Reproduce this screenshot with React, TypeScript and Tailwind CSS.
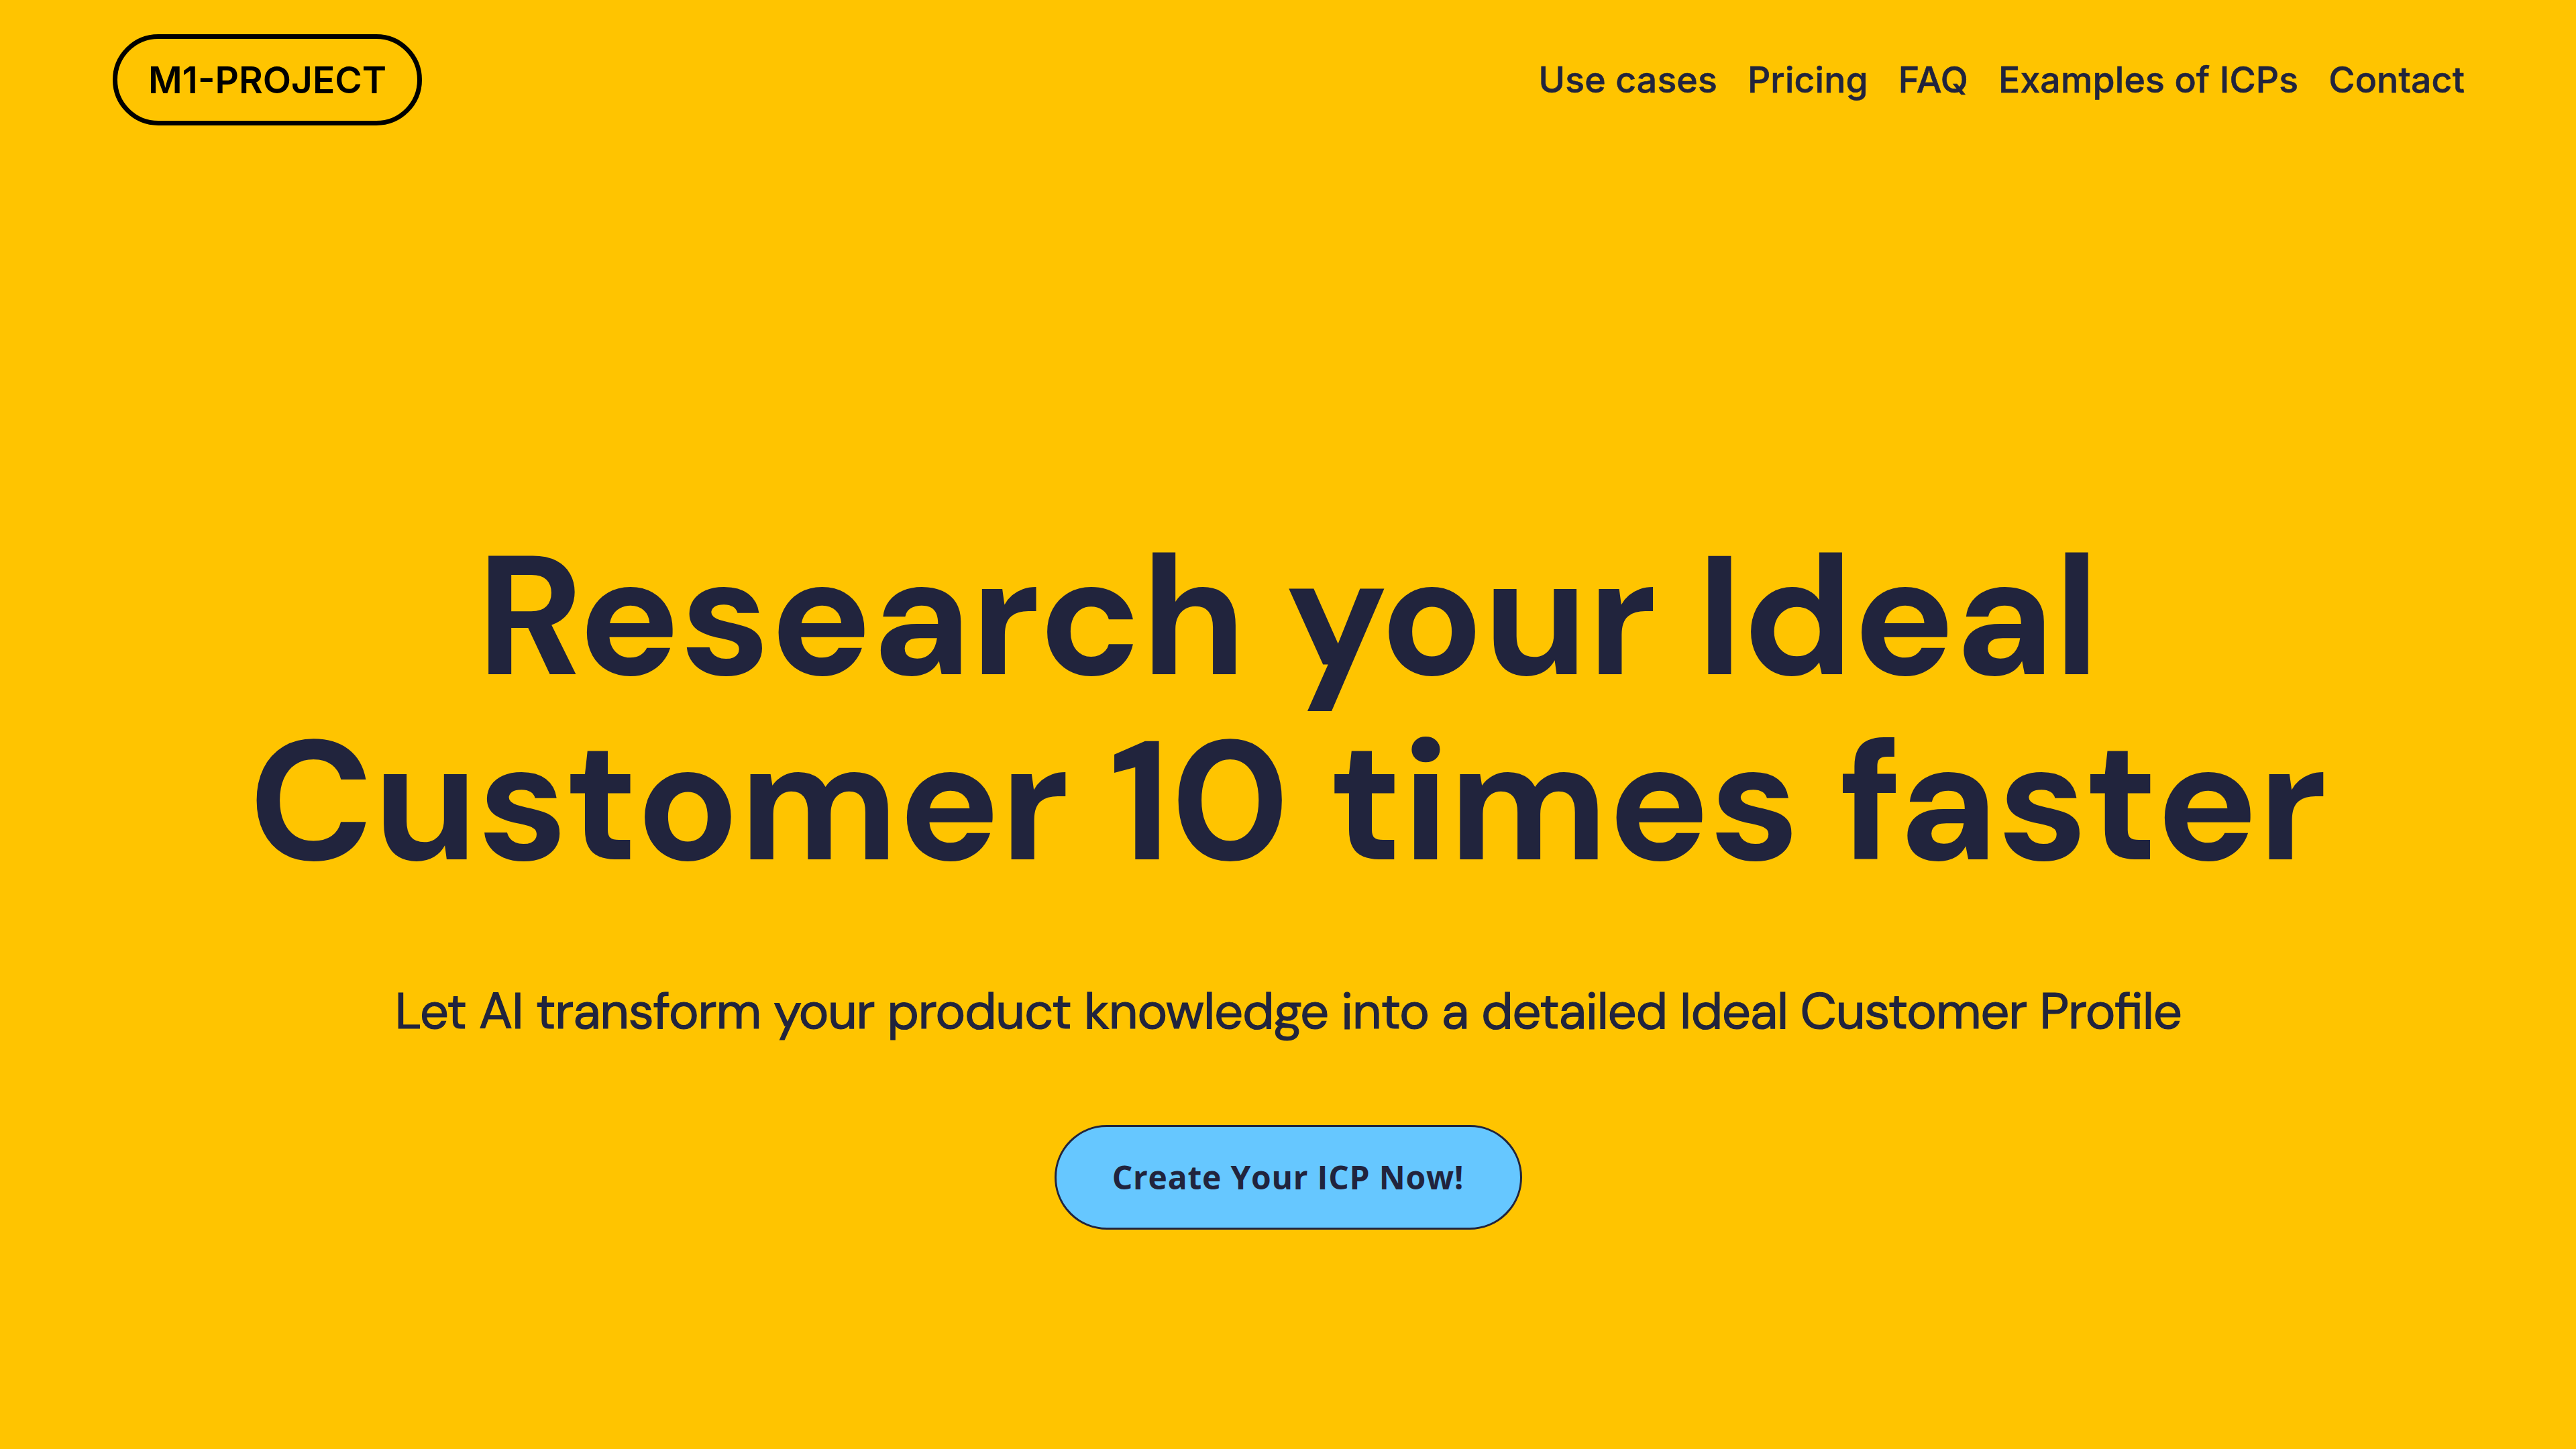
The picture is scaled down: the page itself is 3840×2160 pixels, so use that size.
import React from 'react';

const navLinks = ['Use cases', 'Pricing', 'FAQ', 'Examples of ICPs', 'Contact'];

const Header: React.FC = () => (
  <header className="flex items-center justify-between pt-[51px] pl-[168px] pr-[166px]">
    <a className="flex h-[136px] w-[461px] items-center justify-center rounded-full border-[7px] border-black font-['Inter',sans-serif] text-[55px] font-semibold leading-none text-black">
      M1-PROJECT
    </a>
    <nav className="flex gap-[45px] font-['Inter',sans-serif] text-[53.5px] font-medium leading-none tracking-[0.15px] text-[#21243d] [-webkit-text-stroke:0.6px]">
      {navLinks.map((link) => (
        <a key={link} className="whitespace-nowrap">{link}</a>
      ))}
    </nav>
  </header>
);

const Hero: React.FC = () => (
  <main className="flex flex-col items-center text-center text-[#21243d]">
    <h1 className="mt-[594px] whitespace-nowrap font-['DM_Sans',sans-serif] text-[252px] font-bold leading-[276px]">
      Research your Ideal
      <br />
      Customer 10 times faster
    </h1>
    <p className="mt-[120px] whitespace-nowrap font-['DM_Sans',sans-serif] text-[76px] leading-[110px] tracking-[-1.22px] [font-feature-settings:'liga'] [-webkit-text-stroke:1.2px]">
      Let AI transform your product knowledge into a detailed Ideal Customer Profile
    </p>
    <button className="mt-[114px] h-[156px] w-[697px] rounded-full border-[3px] border-[#21243d] bg-[#66c7ff] font-['Open_Sans',sans-serif] text-[48px] font-bold tracking-[0.75px]">
      Create Your ICP Now!
    </button>
  </main>
);

const App: React.FC = () => (
  <div className="h-[2160px] w-[3840px] overflow-hidden bg-[#ffc400]">
    <Header />
    <Hero />
  </div>
);

export default App;
